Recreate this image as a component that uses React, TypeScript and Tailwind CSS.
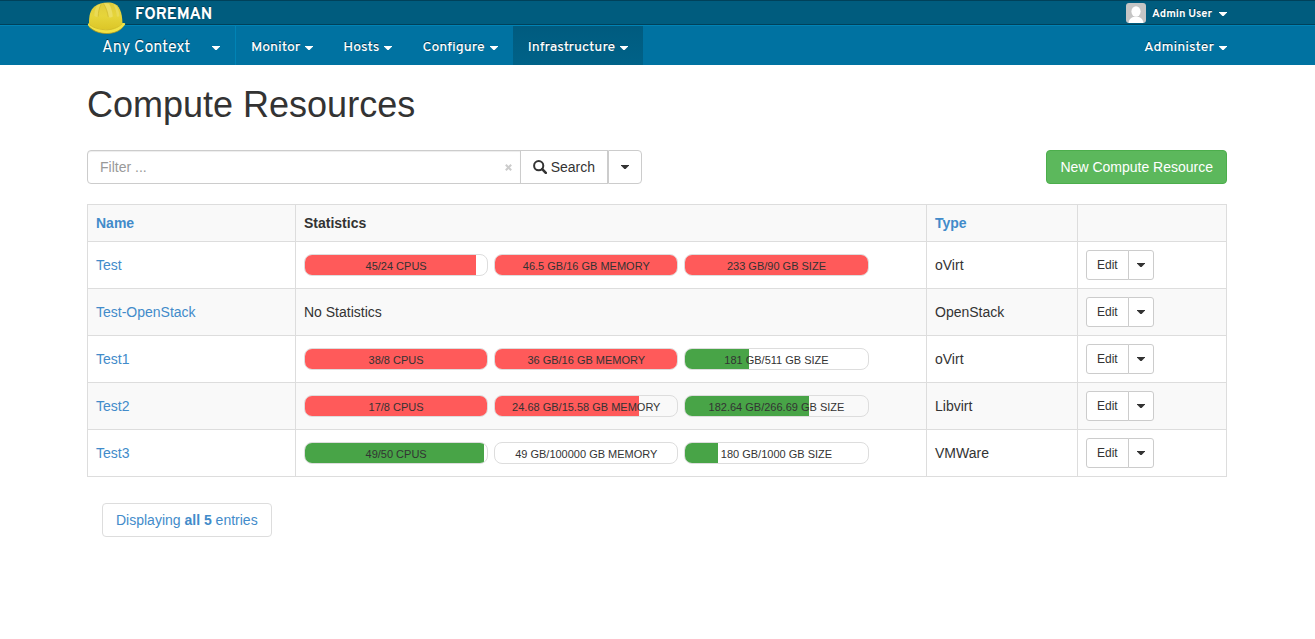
import React from "react";

type Stat = { label: string; percent: number; over?: boolean };
type Resource = { name: string; type: string; stats: Stat[] };

const resources: Resource[] = [
  {
    name: "Test",
    type: "oVirt",
    stats: [
      { label: "45/24 CPUS", percent: 94, over: true },
      { label: "46.5 GB/16 GB MEMORY", percent: 100, over: true },
      { label: "233 GB/90 GB SIZE", percent: 100, over: true },
    ],
  },
  { name: "Test-OpenStack", type: "OpenStack", stats: [] },
  {
    name: "Test1",
    type: "oVirt",
    stats: [
      { label: "38/8 CPUS", percent: 100, over: true },
      { label: "36 GB/16 GB MEMORY", percent: 100, over: true },
      { label: "181 GB/511 GB SIZE", percent: 35 },
    ],
  },
  {
    name: "Test2",
    type: "Libvirt",
    stats: [
      { label: "17/8 CPUS", percent: 100, over: true },
      { label: "24.68 GB/15.58 GB MEMORY", percent: 79, over: true },
      { label: "182.64 GB/266.69 GB SIZE", percent: 68 },
    ],
  },
  {
    name: "Test3",
    type: "VMWare",
    stats: [
      { label: "49/50 CPUS", percent: 98 },
      { label: "49 GB/100000 GB MEMORY", percent: 0 },
      { label: "180 GB/1000 GB SIZE", percent: 18 },
    ],
  },
];

function Caret() {
  return (
    <svg className="h-1 w-2 shrink-0" viewBox="0 0 8 4" fill="currentColor" aria-hidden="true">
      <path d="M0 0h8v.6L4.600 4H3.400L0 .6z" />
    </svg>
  );
}

function HardHat() {
  return (
    <svg className="h-[34px] w-10" viewBox="0 0 40 34" aria-hidden="true">
      <defs>
        <linearGradient id="shell" x1="0" y1="0" x2="0" y2="1">
          <stop offset="0" stopColor="#dfcb3c" />
          <stop offset="0.5" stopColor="#e6d53a" />
          <stop offset="1" stopColor="#dcc628" />
        </linearGradient>
      </defs>
      <path d="M1 22.500C.7 23.800 1.200 24.800 2.200 25.800 6.500 30 13 32.500 19.500 32.500c7.500 0 13-2.600 16-6 .9-1 2-2 2.600-3 .5-1-.6-1.500-2.300-1.400z" fill="#f1e345" />
      <path d="M2.200 26C6.500 30.300 13 32.500 19.500 32.500c7.500 0 13-2.600 16-6" fill="none" stroke="#b59c17" strokeWidth="0.8" />
      <path d="M2 23C1.800 15 3.200 9 7.500 5.500 12 2 19 .8 25.500 2c7 1.500 9.800 10 9.900 19.700-4.200 5-10.200 7.200-16.200 6.900-7-.4-13.500-2-17.200-5.600z" fill="url(#shell)" />
      <path d="M16.500 2.500c2-.5 4.200-.3 5.500.2 2 3.500 3.500 8 3.800 12.800-1 1-3.200 1.200-4.500.5C20.500 10.500 19 6.500 16.500 2.500z" fill="#ebdd60" />
      <path d="M10 4.500c1.300-.8 2.800-1.200 4-.9-2 3.500-2.600 7.500-2.800 12-1.300.7-3 .3-3.800-.5C7.300 10.800 8 7.200 10 4.500z" fill="#e9da56" />
      <path d="M26.500 3.500c1.500.3 2.500 1 3.300 2 1.600 2.700 2.400 6 2.600 9.500-.7.7-1.600.8-2.500.5-.4-4.500-1.500-8.300-3.400-12z" fill="#e9da56" />
      <path d="M11.200 15.600c.2-4.500.8-8.500 2.800-12M21.300 16C20.500 10.500 19 6.500 16.500 2.500" fill="none" stroke="#cdb628" strokeWidth="0.7" />
      <path d="M2.500 23.600c4 3.500 10 4.900 16 5.200 6 .2 12.500-1.700 17-6.400" fill="none" stroke="#cdb628" strokeWidth="0.8" />
    </svg>
  );
}

function Avatar() {
  return (
    <svg className="size-5 rounded-[3px]" viewBox="0 0 20 20" aria-hidden="true">
      <rect width="20" height="20" fill="#c5c5c5" />
      <ellipse cx="10" cy="8.500" rx="4.600" ry="5.200" fill="#fff" />
      <path d="M2.500 20c.3-3 1.800-5 4.500-6h6c2.700 1 4.200 3 4.500 6z" fill="#fff" />
    </svg>
  );
}

function SearchIcon() {
  return (
    <svg className="size-3.5" viewBox="0 0 14 14" fill="none" stroke="currentColor" aria-hidden="true">
      <circle cx="5.700" cy="5.700" r="4.600" strokeWidth="2" />
      <path d="M9.200 9.200l3.600 3.600" strokeWidth="2.600" strokeLinecap="round" />
    </svg>
  );
}

function ClearIcon() {
  return (
    <svg className="size-[7px]" viewBox="0 0 7 7" stroke="currentColor" strokeWidth="2" aria-hidden="true">
      <path d="M.8.8l5.400 5.400M6.200.8L.8 6.200" />
    </svg>
  );
}

const navShadow = "[text-shadow:0_-1px_0_#003a52]";
const container = "mx-auto max-w-[1141px] pr-px";

function NavItem({ label, active }: { label: string; active?: boolean }) {
  return (
    <button
      type="button"
      className={`flex items-center gap-[5px] px-[15px] pt-1 text-sm font-medium text-white ${navShadow} ${
        active ? "bg-linear-to-b from-[#005b7f] to-[#006288]" : ""
      }`}
    >
      {label}
      <Caret />
    </button>
  );
}

function StatBar({ label, percent, over }: Stat) {
  return (
    <div className="relative h-[22px] w-[30%] overflow-hidden rounded-lg border border-[#ddd]">
      <div
        className={`h-full ${over ? "bg-[#ff5a5a]" : "bg-[#48a447]"}`}
        style={{ width: `${percent}%` }}
      />
      <span className="absolute inset-0 text-center text-[11px] leading-[22px]">{label}</span>
    </div>
  );
}

export default function App() {
  const cell = "border border-[#ddd] p-2 text-left align-middle";
  return (
    <div className="min-h-screen bg-white font-['Liberation_Sans',Arial,sans-serif] text-sm leading-5 text-[#333]">
      <header className="font-[Overpass,Inter,sans-serif] text-white">
        <div className="border-y border-[#00415a] bg-[#005c7e]">
          <div className={`flex h-[23px] items-center justify-between ${container}`}>
            <a href="#" className="relative flex items-center pl-12 text-base font-bold">
              <span className="absolute top-0.5 left-0">
                <HardHat />
              </span>
              <span className={`pt-1 ${navShadow}`}>FOREMAN</span>
            </a>
            <button type="button" className={`flex items-center gap-[6px] text-[11px] font-bold ${navShadow}`}>
              <Avatar />
              <span className="flex items-center gap-[7px] pt-0.5">
                Admin User
                <Caret />
              </span>
            </button>
          </div>
        </div>
        <nav className="border-t border-[#0083b5] bg-[#0072a1]">
          <div className={`flex h-[39px] items-stretch ${container}`}>
            <button
              type="button"
              className={`flex w-[149px] items-center justify-between border-r border-[#0083b5] px-[15px] pt-1 text-base ${navShadow}`}
            >
              Any Context
              <Caret />
            </button>
            <NavItem label="Monitor" />
            <NavItem label="Hosts" />
            <NavItem label="Configure" />
            <NavItem label="Infrastructure" active />
            <button type="button" className={`ml-auto flex items-center gap-[5px] pt-1 text-sm font-medium ${navShadow}`}>
              Administer
              <Caret />
            </button>
          </div>
        </nav>
      </header>

      <main className={container}>
        <h1 className="pt-5 text-4xl leading-10 text-[#333]">Compute Resources</h1>

        <div className="mt-[25px] flex items-center justify-between">
          <form className="flex h-[34px] w-[555px]" onSubmit={(e) => e.preventDefault()}>
            <label className="flex min-w-0 flex-1 items-center rounded-l border border-[#ccc] pr-2 pl-3 shadow-[inset_0_1px_1px_rgba(0,0,0,0.075)]">
              <input
                type="text"
                aria-label="Filter"
                placeholder="Filter ..."
                className="min-w-0 flex-1 outline-none placeholder:text-[#999]"
              />
              <button type="button" aria-label="Clear" className="text-[#ccc]">
                <ClearIcon />
              </button>
            </label>
            <button type="submit" className="-ml-px flex items-center gap-1 border border-[#ccc] bg-white px-3">
              <SearchIcon />
              Search
            </button>
            <button
              type="button"
              aria-label="Search options"
              className="flex items-center rounded-r border border-[#ccc] bg-white px-3"
            >
              <Caret />
            </button>
          </form>
          <button type="button" className="rounded border border-[#4cae4c] bg-[#5cb85c] px-[13px] py-1.5 text-white">
            New Compute Resource
          </button>
        </div>

        <table className="mt-5 w-full table-fixed border-collapse">
          <thead>
            <tr className="bg-[#f9f9f9]">
              <th className={`w-[208px] ${cell}`}>
                <a href="#" className="text-[#428bca]">Name</a>
              </th>
              <th className={cell}>Statistics</th>
              <th className={`w-[151px] ${cell}`}>
                <a href="#" className="text-[#428bca]">Type</a>
              </th>
              <th className={`w-[149px] ${cell}`} aria-label="Actions" />
            </tr>
          </thead>
          <tbody>
            {resources.map((r) => (
              <tr key={r.name} className="even:bg-[#f9f9f9]">
                <td className={cell}>
                  <a href="#" className="text-[#428bca]">{r.name}</a>
                </td>
                <td className={cell}>
                  {r.stats.length ? (
                    <div className="flex gap-1.5">
                      {r.stats.map((s) => (
                        <StatBar key={s.label} {...s} />
                      ))}
                    </div>
                  ) : (
                    "No Statistics"
                  )}
                </td>
                <td className={cell}>{r.type}</td>
                <td className={cell}>
                  <div className="flex h-[30px] text-xs">
                    <button type="button" className="rounded-l-[3px] border border-[#ccc] bg-white px-2.5">
                      Edit
                    </button>
                    <button
                      type="button"
                      aria-label={`More actions for ${r.name}`}
                      className="-ml-px flex items-center rounded-r-[3px] border border-[#ccc] bg-white px-2"
                    >
                      <Caret />
                    </button>
                  </div>
                </td>
              </tr>
            ))}
          </tbody>
        </table>

        <div className="mt-[26px] pl-[15px]">
          <a href="#" className="inline-block rounded border border-[#ddd] bg-white px-[13px] py-1.5 text-[#428bca]">
            Displaying <b>all 5</b> entries
          </a>
        </div>
      </main>
    </div>
  );
}
